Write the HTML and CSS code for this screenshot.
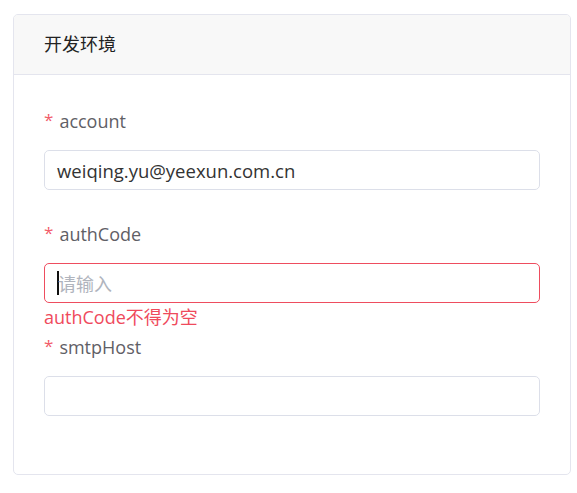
FILE: index.html
```html
<!DOCTYPE html>
<html lang="zh">
<head>
<meta charset="utf-8">
<link rel="stylesheet" href="styles.css">
</head>
<body>
<div class="card">
  <div class="card-header">开发环境</div>
  <div class="card-body">
    <div class="form-item">
      <div class="label"><span class="req">*</span>account</div>
      <div class="input"><span class="value">weiqing.yu@yeexun.com.cn</span></div>
    </div>
    <div class="form-item is-error">
      <div class="label"><span class="req">*</span>authCode</div>
      <div class="input"><span class="caret"></span><span class="placeholder">请输入</span></div>
      <div class="error">authCode不得为空</div>
    </div>
    <div class="form-item">
      <div class="label"><span class="req">*</span>smtpHost</div>
      <div class="input"></div>
    </div>
  </div>
</div>
</body>
</html>
```
FILE: styles.css
```css
html, body {
  margin: 0;
  padding: 0;
  background: #ffffff;
}
body {
  padding: 14px 6px 0 13px;
  font-family: "Open Sans", "Noto Sans CJK SC", sans-serif;
}
.card {
  border: 1px solid #e4e5ee;
  border-radius: 5px;
  background: #fff;
  overflow: hidden;
}
.card-header {
  height: 59px;
  line-height: 59px;
  background: #f8f8f8;
  border-bottom: 1px solid #e4e5ee;
  padding-left: 30px;
  font-size: 18px;
  color: #222;
}
.card-body {
  padding: 35px 30px 25px 30px;
}
.form-item {
  position: relative;
  margin-bottom: 33px;
}
.label {
  height: 22px;
  line-height: 22px;
  font-size: 18px;
  color: #5f6066;
  margin-bottom: 18px;
  display: flex;
  align-items: center;
}
.req {
  color: #f25c6a;
  font-size: 17px;
  margin-right: 6px;
  position: relative;
  top: -1px;
}
.input {
  height: 38px;
  border: 1px solid #dcdfe9;
  border-radius: 5px;
  display: flex;
  align-items: center;
  padding: 0 12px;
  font-size: 18px;
}
.value {
  color: #333;
  font-size: 18.5px;
}
.placeholder {
  color: #b0b4bd;
}
.caret {
  width: 2px;
  height: 24px;
  background: #111;
  margin-right: -1px;
}
.is-error .input {
  border-color: #ee4d5f;
}
.error {
  position: absolute;
  top: 100%;
  left: 0;
  font-size: 18px;
  line-height: 28px;
  color: #ef4a5c;
}
```
